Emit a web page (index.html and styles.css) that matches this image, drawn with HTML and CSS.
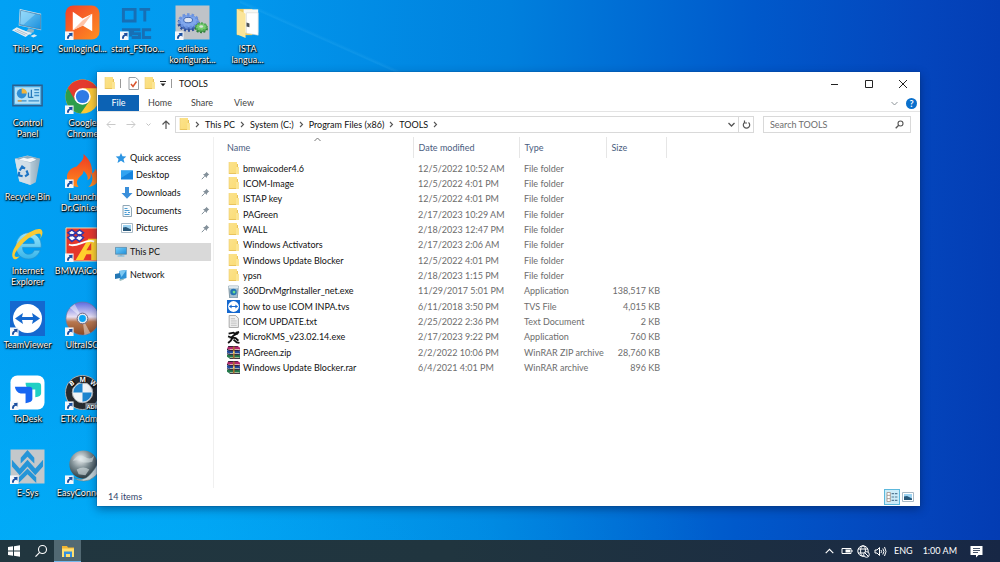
FILE: index.html
```html
<!DOCTYPE html>
<html lang="en">
<head>
<meta charset="utf-8">
<title>TOOLS</title>
<link rel="stylesheet" href="styles.css">
</head>
<body>
<svg class="defs" aria-hidden="true">
  <defs>
    <linearGradient id="gFolder" x1="0" x2="1" y1="0" y2="1"><stop offset="0" stop-color="#fbe28c"/><stop offset="1" stop-color="#fbdc74"/></linearGradient>
    <linearGradient id="gScreen" x1="0" x2="1" y1="0" y2="1"><stop offset="0" stop-color="#7ad0fa"/><stop offset="1" stop-color="#1b8fdc"/></linearGradient>
    <linearGradient id="gSun" x1="0" x2="1" y1="0" y2="1"><stop offset="0" stop-color="#f0402a"/><stop offset="1" stop-color="#ff9020"/></linearGradient>
    <linearGradient id="gFire" x1="0" x2="0" y1="0" y2="1"><stop offset="0" stop-color="#ee3a24"/><stop offset="1" stop-color="#ff8a1c"/></linearGradient>
    <linearGradient id="gDisc" x1="0" x2="0" y1="0" y2="1"><stop offset="0" stop-color="#5c6be0"/><stop offset=".45" stop-color="#e8e0f4"/><stop offset=".6" stop-color="#b87850"/><stop offset="1" stop-color="#8a4a26"/></linearGradient>
    <linearGradient id="gBin" x1="0" x2="1"><stop offset="0" stop-color="#dbe8f0"/><stop offset=".6" stop-color="#b9cdda"/><stop offset="1" stop-color="#8da9bb"/></linearGradient>
    <linearGradient id="gIE" x1="0" x2="0" y1="0" y2="1"><stop offset="0" stop-color="#9be6fb"/><stop offset="1" stop-color="#36b4ea"/></linearGradient>
    <radialGradient id="gBall" cx=".4" cy=".3" r=".7"><stop offset="0" stop-color="#f2f6f7"/><stop offset=".5" stop-color="#7c8c92"/><stop offset="1" stop-color="#28383e"/></radialGradient>
    <symbol id="folder" viewBox="0 0 11 13"><path d="M1 0h8v2h1v10H1z" fill="url(#gFolder)"/><path d="M9 2h1v10H1v-1h7.500z" fill="#e8c35c"/><path d="M8 5h3v7H8z" fill="#fbe595"/><path d="M1 0v12" stroke="#efcf70" stroke-width=".6"/></symbol>
    <symbol id="shortcut" viewBox="0 0 9 9"><path d="M0 0h9v9H0z" fill="#f4f7fb"/><path d="M2 7.600C2 5 3 4 4.600 3.700L3.800 2l4-.400-.200 4-1.200-1C5 4.700 4 5.500 4 7.600z" fill="#1b4fa0"/></symbol>
    <symbol id="pin" viewBox="0 0 9 9"><path d="M5.300.700 8.300 3.700 7.300 4 6 5.600 5.800 7 2 3.200 3.500 3 5 1.700z" fill="#83909a"/><path d="M3.700 5.200.800 8.200" stroke="#83909a" stroke-width="1"/></symbol>
    <symbol id="chev" viewBox="0 0 5 7"><path d="M1 1l2.500 2.500L1 6" fill="none" stroke="#555" stroke-width="1.100"/></symbol>
    <symbol id="winrar" viewBox="0 0 12 12"><path d="M1 .500 10 0l2 1.500v2L3 4 0 2.500z" fill="#b3276b"/><path d="M0 4l10-.300L12 5v2.500H2.500L0 6z" fill="#234c9c"/><path d="M0 7.800l9.500-.300L12 8.500v3H2.500L0 10z" fill="#247a4c"/><path d="M2.500 3.300h9M2.500 7h9M2.500 10.800h9" stroke="#eadfc4" stroke-width=".7"/><path d="M0 3l2.500 1.300H12M0 7l2.500 1H12M1 .600l9-.500M2.500 11.700H12" fill="none" stroke="#2b1930" stroke-width=".9"/><path d="M5.500.500h1.500v11H5.500z" fill="#a96d30"/><path d="M5.500 5H7v2H5.500z" fill="#f2d577"/></symbol>
    <symbol id="tv" viewBox="0 0 35 35"><path d="M0 0h35v35H0z" fill="#1468cf"/><circle cx="17.500" cy="17.500" r="14.500" fill="#fff"/><path d="M5 17.500l8-5.500-1 4h11l-1-4 8 5.500-8 5.500 1-4H12l1 4z" fill="#1468cf"/></symbol>
    <symbol id="picture" viewBox="0 0 12 10"><path d="M.500.500h11v9H.500z" fill="#fff" stroke="#a9bac7"/><path d="M2 2h8v6H2z" fill="#9cd3f2"/><path d="M2 4.500 5 4l5 2.500V8H2z" fill="#28587a"/></symbol>
    <symbol id="monitor" viewBox="0 0 14 12"><path d="M.500.500h13v8H.500z" fill="url(#gScreen)" stroke="#5d8ba8"/><path d="M5.500 9h3v1h-3z" fill="#899"/><path d="M3 10h8v1.300H3z" fill="#69b5df"/></symbol>
  </defs>
</svg>

<main class="desktop">
  <nav class="icons" aria-label="Desktop">
    <a class="shortcut" href="#"><svg viewBox="0 0 36 36"><path d="M10 4l22 5v17L9 21z" fill="#d8eaf5"/><path d="M11 5.500l20.500 4.500v15l-21.500-4.500z" fill="url(#gScreen)" stroke="#3c6f94" stroke-width=".6"/><path d="M11.500 6 26 9.500 14 20l-3.500-.5z" fill="#a9e2fc" opacity=".5"/><path d="M19 24l6 1.500-1 3-7-1.500z" fill="#8db4c9"/><path d="M13 26l10 2.500-2 2-10-2.500z" fill="#c9dde8"/><path d="M2 26l5-3 14 6-5 4z" fill="#e5eff5"/><path d="M5 26l11 5M7 25l11 5" stroke="#93aab9" stroke-width=".7"/><path d="M21 32l4-2 3 1.500-4 2z" fill="#dce9f1"/></svg><span>This PC</span></a>
    <a class="shortcut" href="#"><svg viewBox="0 0 36 36"><rect x=".5" y=".5" width="35" height="35" rx="8" fill="url(#gSun)"/><path d="M8 7l10 7 10-5v18l-10-6L8 26z" fill="#fff"/><path d="M8 26l10-10 10-7-9 12z" fill="#ffc4a8"/><use href="#shortcut" x="0" y="27" width="9" height="9"/></svg><span>SunloginCl...</span></a>
    <a class="shortcut" href="#"><svg viewBox="0 0 36 36" fill="none" stroke="#176fb5" stroke-width="3"><path d="M3.500 4.500h12v12h-12zM20 4.500h11M25.500 4v13M2 25.500h9v7M21 25.500h-8v4h7v4h-8M32 25.500h-8v8h8"/><use href="#shortcut" x="0" y="27" width="9" height="9" stroke="none"/></svg><span>start_FSToo...</span></a>
    <a class="shortcut" href="#"><svg viewBox="0 0 36 36"><path d="M.500.500h35v35H.500z" fill="#bfc3c8"/><ellipse cx="14" cy="19" rx="10" ry="7" fill="#476bb8" stroke="#2e4f9a" stroke-width="3" stroke-dasharray="2 2"/><ellipse cx="14" cy="16.500" rx="9.500" ry="6.500" fill="#7fa6ec" stroke="#6a92de" stroke-width="3" stroke-dasharray="2.500 2"/><ellipse cx="13.500" cy="15.500" rx="4.500" ry="2.800" fill="#dce4f2" stroke="#3a62ae"/><ellipse cx="27" cy="24" rx="6" ry="4" fill="#4a9c4d" stroke="#317e3b" stroke-width="2" stroke-dasharray="2 1.500"/><ellipse cx="27" cy="22.500" rx="5.500" ry="3.700" fill="#78ce70" stroke="#50a955" stroke-width="2" stroke-dasharray="2 1.500"/><ellipse cx="27" cy="22" rx="2" ry="1.300" fill="#d9e4da"/><use href="#shortcut" x="0" y="27" width="9" height="9"/></svg><span>ediabas<br>konfigurat...</span></a>
    <a class="shortcut" href="#"><svg viewBox="0 0 36 36"><path d="M7 4h16v27H7z" fill="#eecb62"/><path d="M14 4.500h15v24H14z" fill="#f8f8f4"/><path d="M17 8h12v23l-12-2z" fill="#fff" stroke="#d6d6d2" stroke-width=".6"/><path d="M7 4l9 5v25l-9-4z" fill="#fbe59a"/><path d="M17 18l3 1v4l-3-1z" fill="#4b5055"/></svg><span>ISTA<br>langua...</span></a>

    <a class="shortcut" href="#"><svg viewBox="0 0 36 36"><path d="M3 6.500h30v21H3z" fill="#47a7e0" stroke="#2a5f8e" stroke-width="1.500"/><path d="M5 8.500h26v17H5z" fill="#b5e2f8"/><circle cx="12" cy="15" r="5" fill="#2f8fd6"/><path d="M12 15V9.500a5.500 5.500 0 0 1 5.500 5.500z" fill="#f3b53a"/><path d="M19 19v-5M22 19v-8M19 19h5" stroke="#2779b9" stroke-width="1.300"/><path d="M25 11h5M25 14h5M25 17h5M8 22.500h9M19 22.500h11" stroke="#3b8fc9" stroke-width="1.400"/><path d="M8 22.500h4" stroke="#e7a13a" stroke-width="1.500"/></svg><span>Control<br>Panel</span></a>
    <a class="shortcut" href="#"><svg viewBox="0 0 36 36"><circle cx="18" cy="18" r="17.500" fill="#fcc934"/><path d="M18 18 2.900 9.200A17.500 17.500 0 0 0 16 35.400L25.500 22z" fill="#2d9d4c"/><path d="M2.900 9.200A17.500 17.500 0 0 1 33.200 9.500H18L10.500 22z" fill="#e33b2e"/><circle cx="18" cy="18" r="8.500" fill="#fff"/><circle cx="18" cy="18" r="6.800" fill="#2f7be5"/><use href="#shortcut" x="0" y="27" width="9" height="9"/></svg><span>Google<br>Chrome</span></a>
    <span class="gap"></span><span class="gap"></span><span class="gap"></span>

    <a class="shortcut" href="#"><svg viewBox="0 0 36 36"><path d="M5 6 18 2.500 31 6l-4.500 24L21 33 9.500 29z" fill="url(#gBin)"/><path d="M5 6 18 3l13 3-10 4z" fill="#8fadc0"/><path d="M5 6l16 4v23L9.500 29z" fill="#d3e0e9" opacity=".8"/><path d="M9 7l5-2 4 1 5-1 4 2-6 2.500z" fill="#f4f7f9"/><path d="M10 18l2.500-4 3 2M17 18l1.500 4-3 2M13 24l-4-1 .5-3.500" fill="none" stroke="#1c74c4" stroke-width="2.200"/></svg><span>Recycle Bin</span></a>
    <a class="shortcut" href="#"><svg viewBox="0 0 36 36"><path d="M19 1c1 6-3 8-7 13C7 15 2 19 2 25c0 6 5 10 12 10-3-4-2-8 3-12 2-2 2-4 2-5 4 4 5 7 4 10 4-2 4-5 3-8 4 5 2 12-2 15 7-1 11-5 11-10 0-4-2-6-4-9 0 2-1 4-3 5 0-8-2-14-9-20z" fill="url(#gFire)"/><use href="#shortcut" x="0" y="27" width="9" height="9"/></svg><span>Launch<br>Dr.Gini.exe</span></a>
    <span class="gap"></span><span class="gap"></span><span class="gap"></span>

    <a class="shortcut" href="#"><svg viewBox="0 0 36 36"><path d="M31 24c-2 6-7 9-12 9-8 0-13-6-13-13S11 6 19 6s14 6 13 15H13c0 5 3 7 6 7 3 0 5-1 6-4zM13 17h12c0-4-2-6-6-6s-6 2-6 6z" fill="url(#gIE)" stroke="#2791cf" stroke-width=".7"/><path d="M4 33C0 30 3 20 13 11S32 0 33 4c1 2 0 5-2 8 1-3 1-5-1-5-3-1-10 3-16 9C7 23 4 28 5 30c1 1 3 1 5 0-2 2-4 4-6 3z" fill="#f9ca36"/></svg><span>Internet<br>Explorer</span></a>
    <a class="shortcut" href="#"><svg viewBox="0 0 36 36"><path d="M1 1h38v34H1z" fill="#e5372b" stroke="#f9e1b2"/><path d="M11 34 24 12h9v22h-6v-6h-5l-3 6z" fill="#ffd02c"/><path d="M22 24l5-8v8z" fill="#e5372b"/><path d="M4 18c8 4 18-7 26-3" fill="none" stroke="#fff" stroke-width="2"/><path d="M3 6l4-3 4 3 4-3 4 3-4 3-4-3-4 3zM3 11l4-3 4 3 4-3 4 3-4 4-4-3-4 3z" fill="#fff" stroke="#3037a8" stroke-width="1.500"/><use href="#shortcut" x="0" y="27" width="9" height="9"/></svg><span>BMWAiCoder</span></a>
    <span class="gap"></span><span class="gap"></span><span class="gap"></span>

    <a class="shortcut" href="#"><svg viewBox="0 0 36 36"><use href="#tv" width="36" height="36"/><use href="#shortcut" x="0" y="27" width="9" height="9"/></svg><span>TeamViewer</span></a>
    <a class="shortcut" href="#"><svg viewBox="0 0 36 36"><circle cx="18" cy="18" r="17" fill="url(#gDisc)" stroke="#73789c" stroke-width=".7"/><path d="M18 18 5 7l5-4zM18 18l8 15-6 2z" fill="#fff" opacity=".45"/><circle cx="18" cy="18" r="5.500" fill="#e4eaf2" stroke="#6d6680"/><circle cx="18" cy="18" r="3.500" fill="#0aa4f4"/><use href="#shortcut" x="0" y="27" width="9" height="9"/></svg><span>UltraISO</span></a>
    <span class="gap"></span><span class="gap"></span><span class="gap"></span>

    <a class="shortcut" href="#"><svg viewBox="0 0 36 36"><rect x=".5" y=".5" width="35" height="35" rx="7" fill="#fff"/><path d="M16 8h13q3 0 3 3v8q0 3-6 4v-8h-6q-4-2-4-7z" fill="#20d0c4"/><path d="M5 12h15q3 0 3 3v10q0 3-7 4V19h-5q-5-1-6-7z" fill="#1766f2"/><use href="#shortcut" x="0" y="27" width="9" height="9"/></svg><span>ToDesk</span></a>
    <a class="shortcut" href="#"><svg viewBox="0 0 36 36"><circle cx="18" cy="18" r="17.500" fill="#262a2e" stroke="#aab0b4"/><circle cx="18" cy="18" r="10.500" fill="#f2f5f7" stroke="#aeb5ba"/><path d="M18 18V8.500A9.500 9.500 0 0 0 8.500 18zM18 18v9.500a9.500 9.500 0 0 0 9.500-9.500z" fill="#1e86cf"/><g fill="#fff" font-family="Open Sans,sans-serif" font-weight="700" font-size="7"><text x="5" y="11" transform="rotate(-35 7 9)">B</text><text x="15" y="7">M</text><text x="26" y="10" transform="rotate(35 28 8)">W</text></g><path d="M21 29h15v6H21z" fill="#8b9298"/><text x="22" y="34.500" fill="#fff" font-family="Open Sans,sans-serif" font-weight="700" font-size="6">ADM</text><use href="#shortcut" x="0" y="27" width="9" height="9"/></svg><span>ETK Admin</span></a>
    <span class="gap"></span><span class="gap"></span><span class="gap"></span>

    <a class="shortcut" href="#"><svg viewBox="0 0 36 36"><path d="M.500.500h35v35H.500z" fill="#c3c8cb"/><path d="M18 1l7 8v6l-7-7-7 7V9zM2 11l8 9 8-9 8 9 8-9v7l-8 9-8-9-8 9-8-9zM18 20l9 9v6l-9-9-9 9v-6z" fill="#2495d8"/><use href="#shortcut" x="0" y="27" width="9" height="9"/></svg><span>E-Sys</span></a>
    <a class="shortcut" href="#"><svg viewBox="0 0 36 36"><circle cx="19" cy="16" r="14.500" fill="url(#gBall)"/><path d="M8 12q6-8 12-4t10-1l-2 6q-8 2-11 0t-9-1zM12 21q7-4 13 0l-4 6-7-1z" fill="#dbe4e6" opacity=".6"/><path d="M6 28q12 8 21-3t8-17q5 13-4 20-11 10-25 0z" fill="#c4d3d7" stroke="#5f7880" stroke-width=".6"/><use href="#shortcut" x="0" y="27" width="9" height="9"/></svg><span>EasyConnect</span></a>
  </nav>

  <section class="window" aria-label="TOOLS">
    <header class="titlebar">
      <svg class="fico" viewBox="0 0 11 13"><use href="#folder"/></svg>
      <i class="bar"></i>
      <svg class="fico" viewBox="0 0 11 13"><path d="M1 .500h6.500L10.500 3v9.500H1z" fill="#fff" stroke="#9a9fa3"/><path d="M3 7l2 2.500L8.500 4.500" fill="none" stroke="#d9532c" stroke-width="1.500"/></svg>
      <svg class="fico" viewBox="0 0 11 13"><use href="#folder"/></svg>
      <svg class="drop" viewBox="0 0 6 6"><path d="M0 .500h6" stroke="#222"/><path d="M.500 2.500h5L3 5.300z" fill="#222"/></svg>
      <i class="bar"></i>
      <h1>TOOLS</h1>
      <div class="controls">
        <button aria-label="Minimize"><svg viewBox="0 0 10 10"><path d="M1 5.500h7" stroke="#222"/></svg></button>
        <button aria-label="Maximize"><svg viewBox="0 0 10 10"><path d="M1.500 1.500h7v7h-7z" fill="none" stroke="#222"/></svg></button>
        <button aria-label="Close"><svg viewBox="0 0 10 10"><path d="M1 1l8 8M9 1 1 9" stroke="#222"/></svg></button>
      </div>
    </header>
    <div class="ribbon">
      <button class="file">File</button><button>Home</button><button>Share</button><button>View</button>
      <span class="help"><svg class="down" viewBox="0 0 7 5"><path d="M.500 1l3 3 3-3" fill="none" stroke="#8d9499"/></svg>
      <button class="q" aria-label="Help">?</button></span>
    </div>
    <div class="address-row">
      <div class="arrows">
        <svg viewBox="0 0 10 9"><path d="M9.500 4.500H1M4.500 1 1 4.500 4.500 8" fill="none" stroke="#c9c9c9"/></svg>
        <svg viewBox="0 0 10 9"><path d="M.500 4.500H9M5.500 1 9 4.500 5.500 8" fill="none" stroke="#c9c9c9"/></svg>
        <svg class="tiny" viewBox="0 0 5 4"><path d="M.500.500l2 2 2-2" fill="none" stroke="#c2c2c2"/></svg>
        <svg viewBox="0 0 10 9"><path d="M5 9V1M1.500 4.500 5 1l3.500 3.500" fill="none" stroke="#555" stroke-width="1.200"/></svg>
      </div>
      <div class="address">
        <svg class="fico" viewBox="0 0 11 13"><use href="#folder"/></svg>
        <svg class="chev"><use href="#chev"/></svg><a href="#">This PC</a>
        <svg class="chev"><use href="#chev"/></svg><a href="#">System (C:)</a>
        <svg class="chev"><use href="#chev"/></svg><a href="#">Program Files (x86)</a>
        <svg class="chev"><use href="#chev"/></svg><a href="#">TOOLS</a>
        <svg class="chev"><use href="#chev"/></svg>
        <svg class="down end" viewBox="0 0 7 5"><path d="M.500 1l3 3 3-3" fill="none" stroke="#555" stroke-width="1.300"/></svg>
        <button class="refresh" aria-label="Refresh"><svg viewBox="0 0 9 10"><path d="M6.500 2.500a3.200 3.200 0 1 1-4 0M2.500.500v2.500H5" fill="none" stroke="#555" stroke-width="1.200"/></svg></button>
      </div>
      <label class="search"><input type="text" placeholder="Search TOOLS" aria-label="Search TOOLS"><svg viewBox="0 0 9 9"><circle cx="5.500" cy="3.500" r="2.500" fill="none" stroke="#555" stroke-width="1.100"/><path d="M3.700 5.300.700 8.300" stroke="#555" stroke-width="1.300"/></svg></label>
    </div>
    <div class="content">
      <nav class="sidebar" aria-label="Folders">
        <div class="quick">
          <a href="#"><svg viewBox="0 0 12 12"><path d="M6 1l1.500 3.200 3.800.200-2.800 2.500 1 4L6 8.800 2.500 11l1-4L.700 4.400l3.800-.200z" fill="#2d95e3"/></svg>Quick access</a>
          <a class="sub" href="#"><svg viewBox="0 0 12 12"><path d="M0 1.500h12v9H0z" fill="#1584de"/><path d="M0 1.500h12L0 9z" fill="#31a3f1"/></svg>Desktop<svg class="pin"><use href="#pin"/></svg></a>
          <a class="sub" href="#"><svg viewBox="0 0 12 12"><path d="M4 0h4v6h3.500L6 11.800.500 6H4z" fill="#3b8fda"/></svg>Downloads<svg class="pin"><use href="#pin"/></svg></a>
          <a class="sub" href="#"><svg viewBox="0 0 12 12"><path d="M2 .500h6.500L10.500 3v8.500H2z" fill="#f7fbfe" stroke="#8fa6b5"/><path d="M3.500 3.500h3M3.500 5.500h5M3.500 7.500h2M7 7.500h2M3.500 9.500h5" stroke="#4b9bd0"/></svg>Documents<svg class="pin"><use href="#pin"/></svg></a>
          <a class="sub" href="#"><svg viewBox="0 0 12 10"><use href="#picture"/></svg>Pictures<svg class="pin"><use href="#pin"/></svg></a>
        </div>
        <a class="current" href="#"><svg viewBox="0 0 14 12"><use href="#monitor"/></svg>This PC</a>
        <a href="#"><svg viewBox="0 0 12 12"><path d="M4 2l7.500-1v8L5 11z" fill="#2d91d5"/><path d="M4 2l7.500-1-5 7z" fill="#7cc8f2"/><path d="M0 5l5-1v5l-5 1z" fill="#2477b4"/><path d="M4 10.500l5-1v1L5 12z" fill="#9bb"/></svg>Network</a>
      </nav>
      <div class="list">
        <table>
          <colgroup><col class="c-name"><col class="c-date"><col class="c-type"><col class="c-size"></colgroup>
          <thead><tr><th scope="col">Name<svg class="sort" viewBox="0 0 7 5"><path d="M.500 4l3-3 3 3" fill="none" stroke="#777"/></svg></th><th scope="col">Date modified</th><th scope="col">Type</th><th scope="col">Size</th></tr></thead>
        </table>
        <table class="files">
          <colgroup><col class="c-name"><col class="c-date"><col class="c-type"><col class="c-size"></colgroup>
          <tbody>
            <tr><td><svg viewBox="0 0 11 13"><use href="#folder"/></svg>bmwaicoder4.6</td><td>12/5/2022 10:52 AM</td><td>File folder</td><td></td></tr>
            <tr><td><svg viewBox="0 0 11 13"><use href="#folder"/></svg>ICOM-Image</td><td>12/5/2022 4:01 PM</td><td>File folder</td><td></td></tr>
            <tr><td><svg viewBox="0 0 11 13"><use href="#folder"/></svg>ISTAP key</td><td>12/5/2022 4:01 PM</td><td>File folder</td><td></td></tr>
            <tr><td><svg viewBox="0 0 11 13"><use href="#folder"/></svg>PAGreen</td><td>2/17/2023 10:29 AM</td><td>File folder</td><td></td></tr>
            <tr><td><svg viewBox="0 0 11 13"><use href="#folder"/></svg>WALL</td><td>2/18/2023 12:47 PM</td><td>File folder</td><td></td></tr>
            <tr><td><svg viewBox="0 0 11 13"><use href="#folder"/></svg>Windows Activators</td><td>2/17/2023 2:06 AM</td><td>File folder</td><td></td></tr>
            <tr><td><svg viewBox="0 0 11 13"><use href="#folder"/></svg>Windows Update Blocker</td><td>12/5/2022 4:01 PM</td><td>File folder</td><td></td></tr>
            <tr><td><svg viewBox="0 0 11 13"><use href="#folder"/></svg>ypsn</td><td>2/18/2023 1:15 PM</td><td>File folder</td><td></td></tr>
            <tr><td><svg viewBox="0 0 12 12"><path d="M1.500 1h9l-1 11h-7z" fill="#a9c0cf" stroke="#6c8595" stroke-width=".7"/><path d="M1.500 1h9v2h-9z" fill="#dfe9ef"/><circle cx="6" cy="6.500" r="3" fill="#2375b4"/><circle cx="6.500" cy="6.500" r="1.300" fill="#6de08c"/></svg>360DrvMgrInstaller_net.exe</td><td>11/29/2017 5:01 PM</td><td>Application</td><td>138,517 KB</td></tr>
            <tr><td><svg viewBox="0 0 35 35"><use href="#tv"/></svg>how to use ICOM INPA.tvs</td><td>6/11/2018 3:50 PM</td><td>TVS File</td><td>4,015 KB</td></tr>
            <tr><td><svg viewBox="0 0 12 12"><path d="M2 .500h6L10.500 3v8.500H2z" fill="#f1f1f1" stroke="#9d9d9d" stroke-width=".8"/><path d="M3.500 3.500h4M3.500 5.500h5.500M3.500 7.500h5.500M3.500 9.500h5.500" stroke="#b5b5b5" stroke-width=".8"/></svg>ICOM UPDATE.txt</td><td>2/25/2022 2:36 PM</td><td>Text Document</td><td>2 KB</td></tr>
            <tr><td><svg viewBox="0 0 12 12"><path d="M1.500 2.500 6 1.500 8 3l3-2.500M7.500 3 4 6l4 .5L10.500 9M4 6 1 5M5 6.500 3.500 9 1 11M6 8l3 2.500 2.500.500" fill="none" stroke="#111" stroke-width="1.700"/><circle cx="9" cy="2" r="1.500" fill="#111"/></svg>MicroKMS_v23.02.14.exe</td><td>2/17/2023 9:22 PM</td><td>Application</td><td>760 KB</td></tr>
            <tr><td><svg viewBox="0 0 12 12"><use href="#winrar"/></svg>PAGreen.zip</td><td>2/2/2022 10:06 PM</td><td>WinRAR ZIP archive</td><td>28,760 KB</td></tr>
            <tr><td><svg viewBox="0 0 12 12"><use href="#winrar"/></svg>Windows Update Blocker.rar</td><td>6/4/2021 4:01 PM</td><td>WinRAR archive</td><td>896 KB</td></tr>
          </tbody>
        </table>
      </div>
    </div>
    <footer class="status">
      <span>14 items</span>
      <button class="view on" aria-label="Details"><svg viewBox="0 0 13 12"><path d="M.500.500h4v11h-4zM.500 4h4M.500 8h4" fill="#fff" stroke="#a08f86"/><path d="M6 2h3M10 2h3M6 6h3M10 6h3M6 10h3M10 10h3" stroke="#557a94" stroke-width="1.400"/></svg></button>
      <button class="view" aria-label="Large icons"><svg viewBox="0 0 12 10"><use href="#picture"/></svg></button>
    </footer>
  </section>
</main>

<footer class="taskbar">
  <button aria-label="Start"><svg viewBox="0 0 14 14"><path d="M1 3l5-.700V6.500H1zM7 2.200 13 1.300v5.200H7zM1 7.500h5v4.200L1 11zM7 7.500h6v5.200l-6-.900z" fill="#fff"/></svg></button>
  <button aria-label="Search"><svg viewBox="0 0 14 14"><circle cx="8.500" cy="5.500" r="4" fill="none" stroke="#fff" stroke-width="1.100"/><path d="M5.700 8.300 1.500 12.700" stroke="#fff" stroke-width="1.200"/></svg></button>
  <button class="active" aria-label="File Explorer"><svg viewBox="0 0 14 14"><path d="M1 2h5l1 1.500h6V13H1z" fill="#f2b632"/><path d="M1 4.500h12V13H1z" fill="#ffdf70"/><path d="M3 13V7.500h8V13H9v-3H5v3z" fill="#348fe0"/></svg></button>
  <div class="tray">
    <svg class="t-up" viewBox="0 0 9 6"><path d="M.700 5.200 4.500 1.300l3.800 3.900" fill="none" stroke="#fff" stroke-width="1.100"/></svg>
    <svg class="t-bat" viewBox="0 0 12 8"><path d="M1 1.500h9v5H1zM11 3v2" fill="none" stroke="#fff"/><path d="M4.500 2.500H9v3H4.500z" fill="#fff"/></svg>
    <svg class="t-net" viewBox="0 0 13 13"><g fill="none" stroke="#fff"><circle cx="6" cy="6" r="5.200"/><ellipse cx="6" cy="6" rx="2.400" ry="5.200"/><path d="M1 4h10M1 8h10"/></g><circle cx="9.500" cy="9.500" r="2.800" fill="#1b2b46" stroke="#fff"/><path d="M7.700 7.700l3.600 3.600" stroke="#fff"/></svg>
    <svg class="t-snd" viewBox="0 0 13 11"><path d="M1 4h2l2.500-2.500v8L3 7H1zM7 4q1.200 1.500 0 3M8.800 2.500q2.300 3 0 6M10.500 1q3 4.500 0 9" fill="none" stroke="#fff"/></svg>
    <span>ENG</span>
    <time>1:00 AM</time>
    <svg class="t-msg" viewBox="0 0 13 13"><path d="M.500 1h12v9H8.500L6 12.500V10H.500z" fill="#fff"/><path d="M3 3.500h7M3 5.500h7M3 7.500h5" stroke="#1b2b46" stroke-width=".8"/></svg>
  </div>
</footer>
</body>
</html>
```
FILE: styles.css
```css
* { box-sizing: border-box; }
html, body { height: 100%; margin: 0; }
body {
  display: flex;
  flex-direction: column;
  overflow: hidden;
  font: 9px/12px Lato, "Open Sans", sans-serif;
  color: #111;
  background:
    linear-gradient(24deg, transparent 49%, rgba(120, 215, 255, .1) 50%, transparent 52%) 240px 0 / 170px 80px no-repeat,
    radial-gradient(ellipse 60% 45% at 12% 100%, rgba(0, 190, 255, .45), transparent),
    linear-gradient(92deg, #01a1f4 0%, #0299ee 22%, #0080dd 50%, #0059cb 74%, #0446bd 90%, #033cb3 100%);
}
button, input { font: inherit; color: inherit; border: 0; padding: 0; margin: 0; background: none; }
a { color: inherit; text-decoration: none; }
svg { display: block; flex: none; }
.defs { position: absolute; width: 0; height: 0; }

.desktop { position: relative; flex: 1; min-height: 0; }
.icons {
  display: grid;
  grid-template-columns: repeat(5, 55px);
  grid-auto-rows: 74px;
}
.shortcut {
  display: flex;
  flex-direction: column;
  align-items: center;
  padding-top: 5px;
  color: #fff;
  line-height: 11px;
  text-align: center;
  white-space: nowrap;
  text-shadow: 0 0 1px #000, 1px 1px 1px #000, 0 1px 2px #000;
}
.shortcut svg { width: 35px; height: 35px; margin-bottom: 3px; }

.window {
  position: absolute;
  top: 72px;
  right: 80px;
  bottom: 34px;
  left: 97px;
  display: flex;
  flex-direction: column;
  background: #fff;
  box-shadow: 0 0 1px #06386f, 0 3px 9px rgba(0, 20, 60, .45);
}
.titlebar { display: flex; align-items: center; height: 23px; padding-left: 7px; gap: 5px; }
.titlebar h1 { margin: 0; font-size: 9px; font-weight: 400; }
.fico { width: 11px; height: 13px; }
.bar { width: 1px; height: 9px; margin: 0 2px 0 0; background: #999; }
.drop { width: 6px; height: 6px; }
.controls { display: flex; align-self: stretch; margin-left: auto; }
.controls button { display: grid; place-items: center; width: 34px; }
.controls svg { width: 10px; height: 10px; }

.ribbon { display: flex; height: 17px; padding-left: 1px; border-bottom: 1px solid #e4e4e4; }
.ribbon > button { width: 42px; color: #444; }
.ribbon > button.file { width: 41px; color: #fff; background: #0c62b4; }
.help { display: flex; align-items: center; gap: 8px; margin-left: auto; padding-right: 3px; }
.down { width: 7px; height: 5px; }
.q { width: 11px; height: 11px; border-radius: 50%; color: #fff; font-weight: 700; line-height: 11px; background: #0a70cc; }

.address-row { display: flex; align-items: center; padding: 4px 9px; }
.arrows { display: flex; align-items: center; gap: 10px; width: 69px; }
.arrows svg { width: 10px; height: 9px; }
.arrows .tiny { width: 5px; height: 4px; }
.address { display: flex; flex: 1; align-items: center; height: 17px; margin-right: 9px; padding-left: 3px; border: 1px solid #d9d9d9; }
.chev { width: 5px; height: 7px; margin: 0 5px; }
.end { margin-left: auto; }
.refresh { display: grid; place-items: center; align-self: stretch; width: 15px; margin-left: 3px; border-left: 1px solid #d9d9d9; }
.refresh svg { width: 9px; height: 10px; }
.search { display: flex; align-items: center; width: 148px; height: 17px; padding: 0 6px; border: 1px solid #d9d9d9; }
.search input { flex: 1; min-width: 0; outline: 0; }
.search input::placeholder { color: #6d6d6d; opacity: 1; }
.search svg { width: 9px; height: 9px; }

.content { display: flex; flex: 1; min-height: 0; }
.sidebar { width: 117px; padding-top: 12px; padding-right: 2px; border-right: 1px solid #f0f0f0; }
.sidebar a { display: flex; align-items: center; gap: 3px; height: 18px; padding-left: 18px; }
.sidebar a svg { width: 12px; height: 12px; }
.quick { display: grid; grid-auto-rows: 1fr; height: 88px; margin-bottom: 6px; }
.quick a { height: auto; }
.quick .sub { padding-left: 24px; }
.sidebar a .pin { width: 9px; height: 9px; margin-left: auto; margin-right: 1px; }
.sidebar .current { margin-bottom: 5px; background: #d9d9d9; }

.list { flex: 1; padding-left: 13px; }
table { table-layout: fixed; width: 439px; border-collapse: collapse; }
.c-name { width: 186px; }
.c-date { width: 106px; }
.c-type { width: 87px; }
.c-size { width: 60px; }
th, td { padding: 0 5px; font-weight: 400; text-align: left; white-space: nowrap; }
th { position: relative; height: 21px; color: #4a5d80; border-right: 1px solid #e6e6e6; }
th:first-child { padding-left: 0; }
.sort { position: absolute; top: 0; left: 47%; width: 7px; height: 5px; }
.files { height: 215px; margin-top: 3px; }
td { color: #6d6d6d; }
td:first-child { display: flex; align-items: center; gap: 3px; height: 15px; padding: 0; color: #111; }
td:first-child svg { width: 13px; height: 13px; }
td:last-child { padding-right: 6px; text-align: right; }

.status { display: flex; align-items: center; height: 18px; padding: 0 4px 0 11px; color: #32456b; }
.status span { margin-right: auto; }
.view { display: grid; place-items: center; width: 16px; height: 16px; }
.view.on { border: 1px solid #5cb8dc; background: #ccecf8; }
.view svg { width: 12px; height: 10px; }

.taskbar { display: flex; height: 22px; color: #fff; background: linear-gradient(90deg, #21363f, #20353f 45%, #1b2c43 85%, #172745); }
.taskbar button { display: grid; place-items: center; width: 27px; }
.taskbar button svg { width: 14px; height: 14px; }
.taskbar .active { background: #526973; border-bottom: 1px solid #76b9ed; }
.tray { display: flex; align-items: center; gap: 4px; margin-left: auto; padding-right: 17px; }
.t-up { width: 9px; height: 6px; margin-right: 3px; }
.t-bat { width: 12px; height: 8px; }
.t-net { width: 13px; height: 13px; }
.t-snd { width: 13px; height: 11px; }
.t-msg { width: 13px; height: 13px; margin-left: 9px; }
.tray span { margin-left: 3px; }
.tray time { margin-left: 6px; }
```
